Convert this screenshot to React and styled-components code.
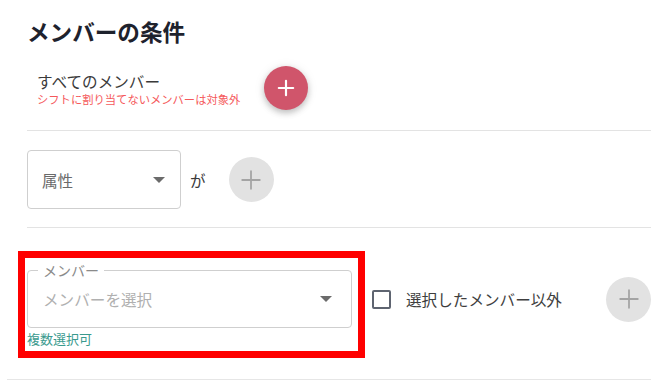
import styled, { createGlobalStyle } from 'styled-components';

const GlobalStyle = createGlobalStyle`
   html, body {
      margin: 0;
      padding: 0;
      background: #ffffff;
   }
   body {
      font-family: 'Noto Sans CJK JP', 'Noto Sans', sans-serif;
      color: #333;
   }
`;

function PlusIcon({ color, size = 20, weight = 2 }) {
   return (
      <svg width={size} height={size} viewBox='0 0 20 20'>
         <path d='M10 2v16M2 10h16' stroke={color} strokeWidth={weight} strokeLinecap='round' />
      </svg>
   );
}

function Caret() {
   return (
      <svg width='12' height='6' viewBox='0 0 12 6'>
         <path d='M0 0h12L6 6z' fill='#6b6b6b' />
      </svg>
   );
}

export default function App() {
   return (
      <>
         <GlobalStyle />
         <Page>
            <Title>メンバーの条件</Title>

            <Section $pad='20px 0 20px'>
               <AllMembers>
                  <MainText>すべてのメンバー</MainText>
                  <Warning>シフトに割り当てないメンバーは対象外</Warning>
               </AllMembers>
               <Fab>
                  <PlusIcon color='#fff' size={18} weight={2.4} />
               </Fab>
            </Section>
            <Divider />

            <Section $pad='19px 0 18px'>
               <SelectBox $width='154px'>
                  <SelectValue>属性</SelectValue>
                  <Caret />
               </SelectBox>
               <Ga>が</Ga>
               <GreyCircle>
                  <PlusIcon color='#a4a4a4' size={22} weight={1.6} />
               </GreyCircle>
            </Section>
            <Divider />

            <Section $pad='23px 0 21px' $align='flex-start'>
               <Highlight>
                  <Outlined>
                     <FloatLabel>メンバー</FloatLabel>
                     <Placeholder>メンバーを選択</Placeholder>
                     <Caret />
                  </Outlined>
                  <Helper>複数選択可</Helper>
               </Highlight>
               <RightGroup>
                  <Check />
                  <CheckLabel>選択したメンバー以外</CheckLabel>
                  <GreyCircle $push>
                     <PlusIcon color='#a4a4a4' size={22} weight={1.6} />
                  </GreyCircle>
               </RightGroup>
            </Section>
            <BottomDivider />
         </Page>
      </>
   );
}

const Page = styled.div`
   width: 671px;
   height: 380px;
   overflow: hidden;
   padding: 18px 20px 0 27px;
   box-sizing: border-box;
`;

const Title = styled.h1`
   margin: 0;
   font-size: 22.6px;
   line-height: 28px;
   font-weight: 700;
   color: #1e222d;
`;

const Section = styled.div`
   display: flex;
   align-items: ${(p) => p.$align || 'center'};
   padding: ${(p) => p.$pad};
`;

const AllMembers = styled.div`
   display: flex;
   flex-direction: column;
   margin-left: 10px;
   margin-right: 24px;
`;

const MainText = styled.div`
   font-size: 15.6px;
   line-height: 22px;
   color: #3a3a3a;
`;

const Warning = styled.div`
   font-size: 11.3px;
   line-height: 15px;
   color: #f5595b;
`;

const Fab = styled.div`
   width: 44px;
   height: 44px;
   border-radius: 50%;
   background: #d0556b;
   display: flex;
   align-items: center;
   justify-content: center;
   box-shadow: 0 3px 6px rgba(0, 0, 0, 0.22), 0 1px 12px rgba(0, 0, 0, 0.08);
`;

const Divider = styled.div`
   height: 1px;
   background: #e3e3e3;
`;

const BottomDivider = styled.div`
   height: 1px;
   background: #e6e6e6;
   margin-left: -20px;
`;

const SelectBox = styled.div`
   width: ${(p) => p.$width};
   height: 59px;
   box-sizing: border-box;
   border: 1px solid #cfcfcf;
   border-radius: 4px;
   display: flex;
   align-items: center;
   justify-content: space-between;
   padding: 0 15px 0 14px;
`;

const SelectValue = styled.span`
   font-size: 15.6px;
   color: #6a6a6a;
`;

const Ga = styled.span`
   font-size: 15.6px;
   color: #3a3a3a;
   margin: 0 23px 0 9px;
`;

const GreyCircle = styled.div`
   width: 45px;
   height: 45px;
   border-radius: 50%;
   background: #e2e2e2;
   display: flex;
   align-items: center;
   justify-content: center;
   margin-left: ${(p) => (p.$push ? 'auto' : '0')};
`;

const Highlight = styled.div`
   border: 7px solid #ff0000;
   margin-left: -9px;
   width: 347px;
   box-sizing: border-box;
   padding: 12px 6px 4px 2px;
`;

const Outlined = styled.div`
   position: relative;
   height: 58px;
   box-sizing: border-box;
   border: 1px solid #cfcfcf;
   border-radius: 4px;
   display: flex;
   align-items: center;
   justify-content: space-between;
   padding: 0 19px 0 15px;
`;

const FloatLabel = styled.span`
   position: absolute;
   top: -10px;
   left: 10px;
   padding: 0 5px;
   background: #fff;
   font-size: 14px;
   line-height: 18px;
   color: #8a8a8a;
`;

const Placeholder = styled.span`
   font-size: 15.6px;
   color: #b0b0b0;
`;

const Helper = styled.div`
   font-size: 13px;
   line-height: 16px;
   margin-top: 3px;
   color: #3a9a8e;
`;

const RightGroup = styled.div`
   flex: 1;
   display: flex;
   align-items: center;
   height: 58px;
   margin-top: 19px;
   padding-left: 7px;
`;

const Check = styled.div`
   width: 19px;
   height: 19px;
   box-sizing: border-box;
   border: 2px solid #5e6470;
   border-radius: 2px;
`;

const CheckLabel = styled.span`
   font-size: 15.6px;
   color: #3e3e3e;
   margin-left: 15px;
`;
